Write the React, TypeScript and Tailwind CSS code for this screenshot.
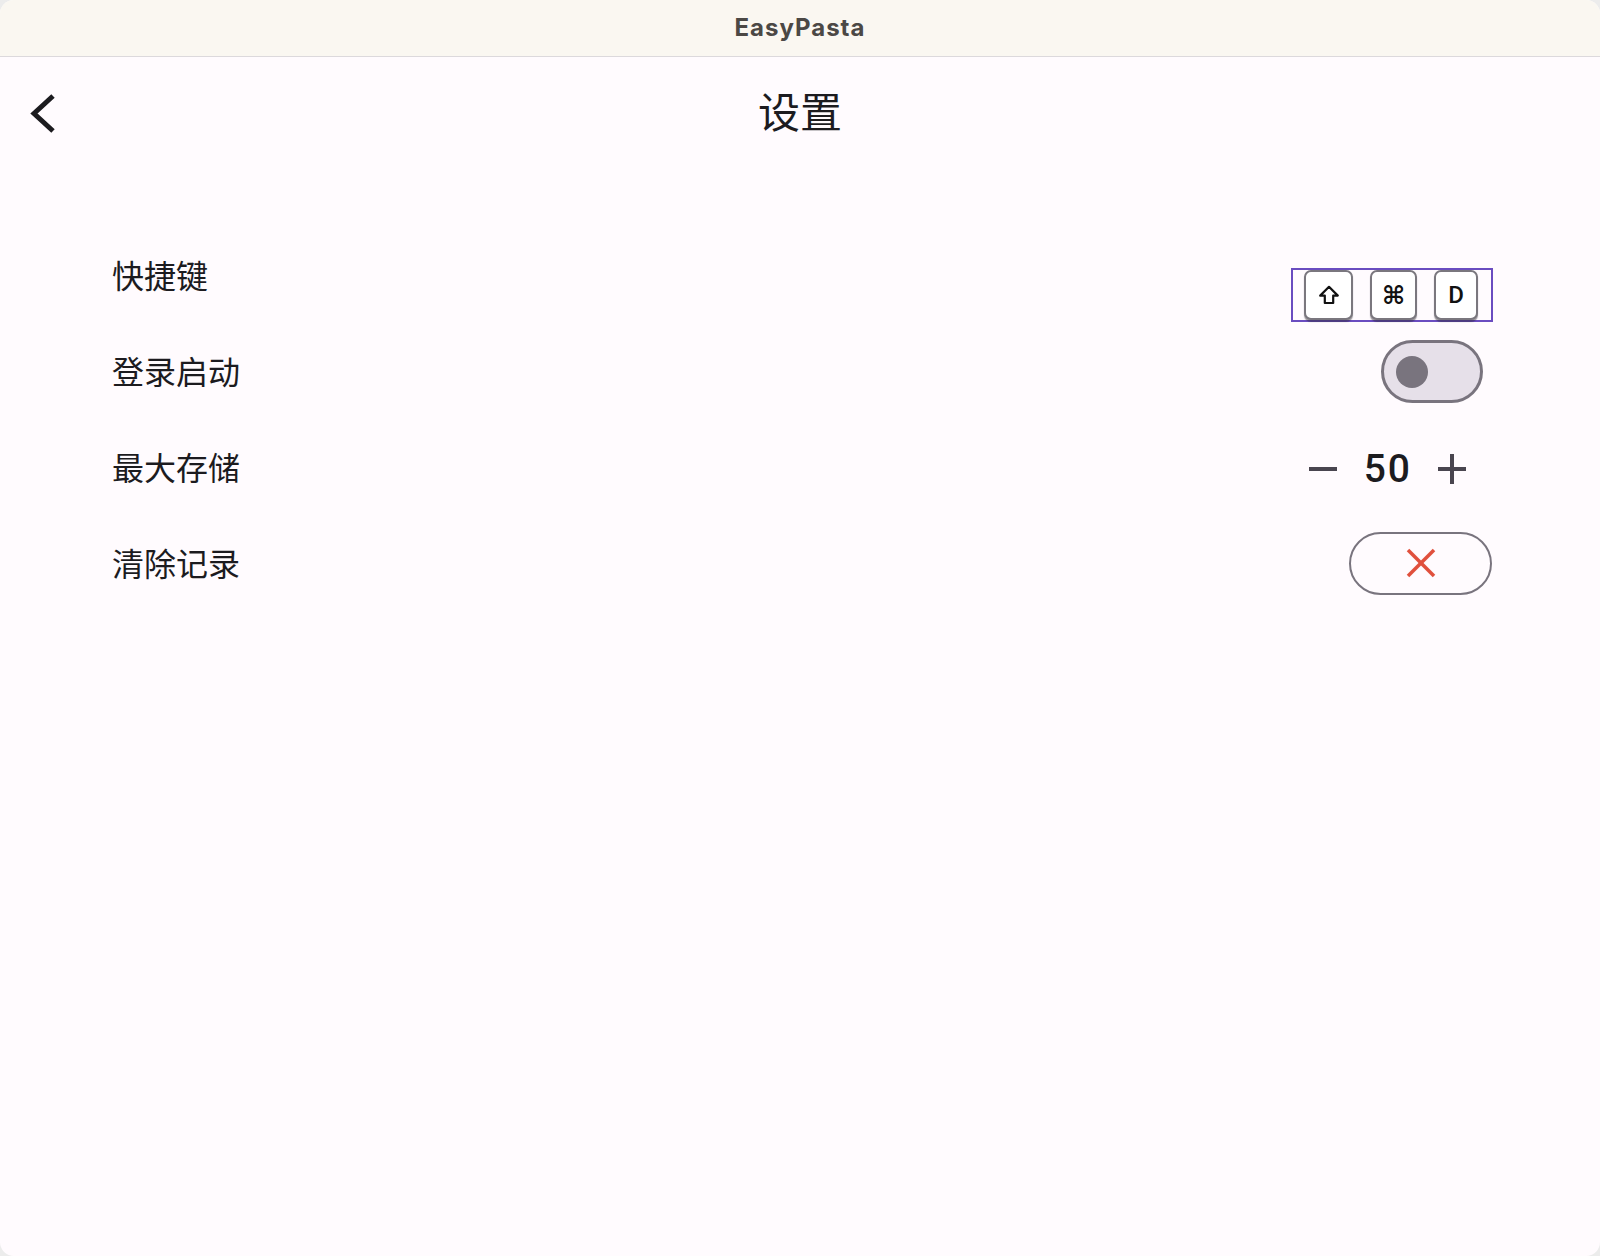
import React from 'react';

const ShiftIcon = () => (
    <svg width="22" height="20" viewBox="0 0 22 20" fill="none">
        <path d="M11 1.8 L2.2 10.6 H6.8 V18 H15.2 V10.6 H19.8 Z" stroke="#111" strokeWidth="2.2" strokeLinejoin="round" />
    </svg>
);

const Key: React.FC<{ className: string; children: React.ReactNode }> = ({ className, children }) => (
    <div
        className={`h-[50px] flex items-center justify-center rounded-[7px] border-2 border-[#7a777e] bg-white shadow-[0_2px_1px_rgba(40,38,45,0.45)] ${className}`}
    >
        {children}
    </div>
);

const Row: React.FC<{ label: string; children: React.ReactNode }> = ({ label, children }) => (
    <div className="h-[96px] flex items-center justify-between">
        <span className="text-[32px] leading-none text-[#1c1b1f]">{label}</span>
        {children}
    </div>
);

export default function App() {
    const [launch, setLaunch] = React.useState(false);
    const [max, setMax] = React.useState(50);

    return (
        <div className="w-full h-[1256px] bg-[#ececec]" style={{ fontFamily: 'Roboto, "Noto Sans CJK SC", sans-serif' }}>
            <div className="w-full h-full flex flex-col rounded-[14px] overflow-hidden bg-[#fffbfe]">
                {/* window title bar */}
                <div className="h-[57px] shrink-0 flex items-center justify-center bg-[#faf7f1] border-b-[1.5px] border-[#dcd9dc]">
                    <span className="text-[24px] font-bold text-[#4b4845] tracking-[1px]" style={{ fontFamily: 'Inter, "Liberation Sans", sans-serif' }}>
                        EasyPasta
                    </span>
                </div>

                {/* app bar */}
                <div className="h-[113px] shrink-0 grid grid-cols-[1fr_auto_1fr] items-center px-[20px]">
                    <button className="w-[48px] h-[48px] flex items-center">
                        <svg width="48" height="48" viewBox="0 0 48 48" fill="none">
                            <polyline points="33,6 14,23.5 33,41" stroke="#1c1b1f" strokeWidth="5" />
                        </svg>
                    </button>
                    <h1 className="text-[42px] leading-none text-[#1c1b1f] font-normal">设置</h1>
                    <div />
                </div>

                {/* settings */}
                <div className="mt-[59px] pl-[112px] pr-[107px] flex flex-col">
                    <Row label="快捷键">
                        <div className="mt-[36px] w-[202px] h-[54px] border-2 border-[#6a4cc0] flex items-end pl-[11px] gap-[17px]">
                            <Key className="w-[49px]">
                                <ShiftIcon />
                            </Key>
                            <Key className="w-[47px]">
                                <span className="text-[25px] leading-none font-bold text-[#111]" style={{ fontFamily: '"DejaVu Sans", sans-serif' }}>⌘</span>
                            </Key>
                            <Key className="w-[44px]">
                                <span className="text-[24px] leading-none font-medium text-[#111]">D</span>
                            </Key>
                        </div>
                    </Row>

                    <Row label="登录启动">
                        <button
                            onClick={() => setLaunch(!launch)}
                            className="mb-[3px] mr-[10px] w-[102px] h-[63px] rounded-full border-[3px] border-[#79747e] bg-[#e6e0e9] flex items-center pl-[12px]"
                        >
                            <span className="w-[32px] h-[32px] rounded-full bg-[#79747e]" />
                        </button>
                    </Row>

                    <Row label="最大存储">
                        <div className="mr-[26px] flex items-center">
                            <button onClick={() => setMax(max - 1)} className="w-[30px] h-[30px] flex items-center">
                                <svg width="30" height="30" viewBox="0 0 30 30">
                                    <line x1="1" y1="15" x2="29" y2="15" stroke="#49454f" strokeWidth="4" />
                                </svg>
                            </button>
                            <span className="ml-[26px] mr-[25px] text-[39px] leading-none font-medium text-[#1c1b1f] tracking-[2px]">{max}</span>
                            <button onClick={() => setMax(max + 1)} className="w-[30px] h-[30px] flex items-center">
                                <svg width="30" height="30" viewBox="0 0 30 30">
                                    <line x1="1" y1="15" x2="29" y2="15" stroke="#49454f" strokeWidth="4" />
                                    <line x1="15" y1="0" x2="15" y2="30" stroke="#49454f" strokeWidth="4" />
                                </svg>
                            </button>
                        </div>
                    </Row>

                    <Row label="清除记录">
                        <button className="mb-[4px] mr-[1px] w-[143px] h-[63px] rounded-full border-2 border-[#79747e] flex items-center justify-center">
                            <svg width="30" height="30" viewBox="0 0 30 30">
                                <line x1="2" y1="2" x2="28" y2="28" stroke="#e0503d" strokeWidth="3.6" />
                                <line x1="28" y1="2" x2="2" y2="28" stroke="#e0503d" strokeWidth="3.6" />
                            </svg>
                        </button>
                    </Row>
                </div>
            </div>
        </div>
    );
}
